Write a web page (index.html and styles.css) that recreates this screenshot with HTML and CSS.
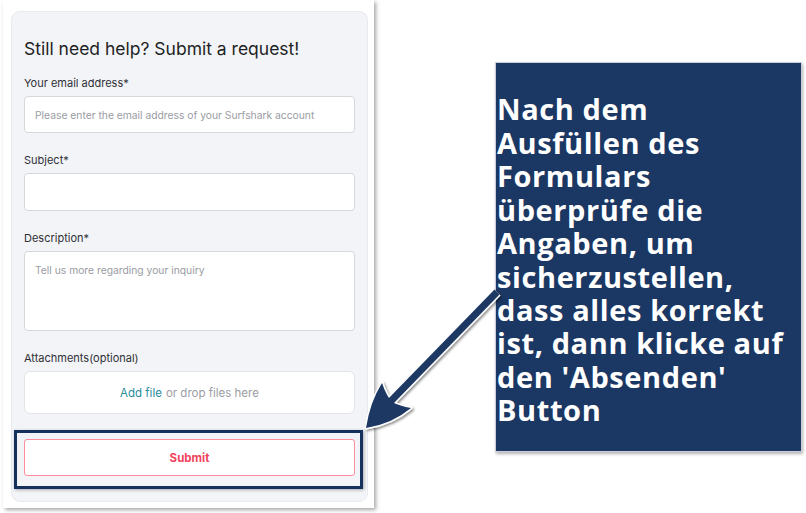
FILE: index.html
```html
<!DOCTYPE html>
<html lang="en">
<head>
    <meta charset="UTF-8">
    <title>Submit a request</title>
    <meta name="viewport" content="width=device-width, initial-scale=1.0">
    <link rel="stylesheet" href="styles.css">
</head>
<body>
    <div class="page">
        <div class="sheet">
            <div class="panel">
                <h1>Still need help? Submit a request!</h1>

                <label class="label">Your email address*</label>
                <div class="field"><span class="hint">Please enter the email address of your Surfshark account</span></div>

                <label class="label">Subject*</label>
                <div class="field field-subject"></div>

                <label class="label">Description*</label>
                <div class="field field-area"><span class="hint">Tell us more regarding your inquiry</span></div>

                <label class="label">Attachments(optional)</label>
                <div class="drop"><span class="add">Add file</span> or drop files here</div>

                <div class="focus">
                    <button class="submit">Submit</button>
                </div>
            </div>
        </div>

        <div class="callout">
            <p>Nach dem<br>Ausfüllen des<br>Formulars<br>überprüfe die<br>Angaben, um<br>sicherzustellen,<br>dass alles korrekt<br>ist, dann klicke auf<br>den 'Absenden'<br>Button</p>
        </div>

        <!-- pointer from the note to the submit button -->
        <svg class="arrow" width="806" height="513" viewBox="0 0 806 513">
            <defs>
                <filter id="shade" x="-20%" y="-20%" width="140%" height="140%">
                    <feDropShadow dx="1.5" dy="1.5" stdDeviation="1.2" flood-color="#000" flood-opacity="0.45"/>
                </filter>
            </defs>
            <g filter="url(#shade)">
                <line x1="497" y1="292" x2="390" y2="402" stroke="#fff" stroke-width="10"/>
                <path d="M366 428 Q370 402 382 383 Q386 395 392 402 Q400 406 411 408 Q392 424 366 428 Z" fill="#fff" stroke="#fff" stroke-width="3" stroke-linejoin="round"/>
                <line x1="497" y1="292" x2="390" y2="402" stroke="#1b3763" stroke-width="7"/>
                <path d="M366 428 Q370 402 382 383 Q386 395 392 402 Q400 406 411 408 Q392 424 366 428 Z" fill="#1b3763"/>
            </g>
        </svg>
    </div>
</body>
</html>
```

FILE: styles.css
```css
* { box-sizing: border-box; }
body { margin: 0; background: #fff; font-family: Inter, "Liberation Sans", sans-serif; }
.page { position: relative; width: 806px; height: 513px; display: flex; align-items: flex-start; }

.sheet { margin-left: 3px; width: 371px; height: 508px; background: #fff; padding: 11px 6px 6px 8px; box-shadow: 2px 2px 4px rgba(0,0,0,0.35); }
.panel { height: 491px; background: #f3f4f8; border: 1px solid #e9eaef; border-radius: 9px; padding: 26px 12px 0 12px; display: flex; flex-direction: column; }

h1 { margin: 0 0 16px; font-size: 17.5px; line-height: 22px; font-weight: 400; color: #1d1f24; }
.label { font-size: 11px; line-height: 14px; color: #2e3035; margin-bottom: 6px; }

.field { height: 37px; background: #fff; border: 1px solid #d5d7dc; border-radius: 4px; padding: 0 10px; display: flex; align-items: center; margin-bottom: 20px; }
.field-subject { height: 38px; }
.field-area { height: 80px; align-items: flex-start; padding-top: 12px; }
.hint { font-size: 10.3px; color: #9a9ca3; }

.drop { height: 43px; background: #fff; border: 1px solid #e2e4e9; border-radius: 6px; display: flex; align-items: center; justify-content: center; font-size: 11.5px; color: #9a9ca3; }
.add { color: #2a8b9d; margin-right: 4px; }

.focus { margin: 16px -8px 0 -10px; height: 59px; border: 3px solid #16325c; padding: 6px 5px 0 7px; box-shadow: 1px 1px 3px rgba(0,0,0,0.3); }
.submit { width: 100%; height: 37px; background: #fff; border: 1px solid #ff8d9e; border-radius: 3px; color: #f0425d; font-family: inherit; font-size: 11.5px; font-weight: 700; }

.callout { margin: 62px 0 0 121px; width: 307px; height: 390px; background: #1b3763; border: 1px solid #c9ced8; box-shadow: 1px 2px 3px rgba(0,0,0,0.3); display: flex; align-items: center; }
.callout p { margin: 5px 0 0 1px; color: #fff; font-family: "Open Sans", sans-serif; font-weight: 700; font-size: 29px; line-height: 33.4px; white-space: nowrap; letter-spacing: 0.6px; }

.arrow { position: absolute; left: 0; top: 0; pointer-events: none; }
```
